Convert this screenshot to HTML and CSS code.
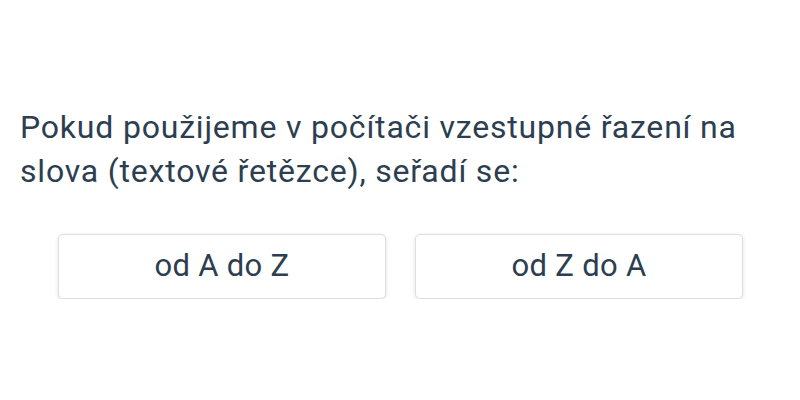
FILE: index.html
```html
<!DOCTYPE html>
<html lang="cs">
<head>
<meta charset="utf-8">
<link rel="stylesheet" href="styles.css">
</head>
<body>
<main class="quiz">
  <p class="question">Pokud použijeme v počítači vzestupné řazení na slova (textové řetězce), seřadí se:</p>
  <div class="answers">
    <button class="answer">od A do Z</button>
    <button class="answer">od Z do A</button>
  </div>
</main>
</body>
</html>
```

FILE: styles.css
```css
html, body {
  margin: 0;
  padding: 0;
  background: #ffffff;
}
body {
  font-family: Roboto, "Noto Sans", sans-serif;
  color: #2c3e50;
}
.quiz {
  padding: 105px 20px 0 20px;
}
.question {
  margin: 0;
  font-size: 32px;
  line-height: 44px;
  letter-spacing: 0.8px;
}
.answers {
  display: grid;
  grid-template-columns: 1fr 1fr;
  gap: 29px;
  padding: 0 37px 0 38px;
  margin-top: 41px;
}
.answer {
  height: 65px;
  display: flex;
  align-items: center;
  justify-content: center;
  background: #ffffff;
  border: 1px solid #dcdee0;
  border-radius: 5px;
  box-shadow: 0 1px 4px rgba(0, 0, 0, 0.12);
  font-family: Roboto, "Noto Sans", sans-serif;
  font-size: 31px;
  letter-spacing: 0.3px;
  color: #2c3e50;
  padding: 0 0 3px 0;
}
```
